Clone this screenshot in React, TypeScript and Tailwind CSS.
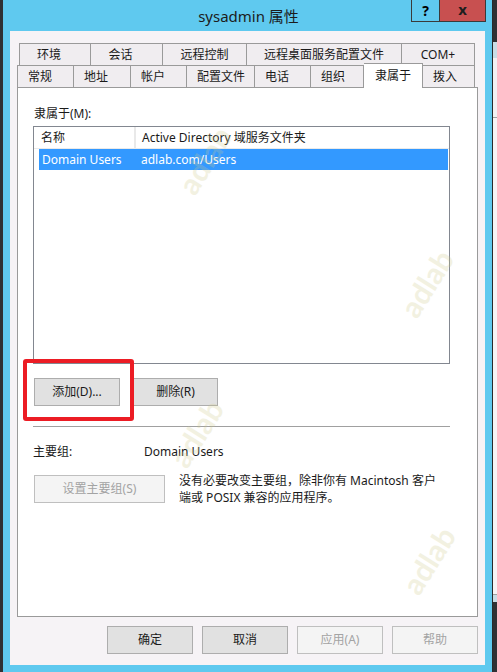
import React from "react";

const row1 = [
    {label: "环境", w: "w-[72px] border-l", pad: "pr-[12px]"},
    {label: "会话", w: "w-[72px]", pad: "pr-[12px]"},
    {label: "远程控制", w: "w-[84px]", pad: ""},
    {label: "远程桌面服务配置文件", w: "w-[155px]", pad: ""},
    {label: "COM+", w: "w-[73px]", pad: ""},
];

const row2 = [
    {label: "常规", w: "w-[57px] border-l"},
    {label: "地址", w: "w-[57px]"},
    {label: "帐户", w: "w-[56px]"},
    {label: "配置文件", w: "w-[68px]"},
    {label: "电话", w: "w-[56px]"},
    {label: "组织", w: "w-[53px]"},
    {label: "隶属于", w: "w-[59px]", active: true},
    {label: "拨入", w: "w-[52px]"},
];

const marks = [
    {left: "left-[168px]", top: "top-[145px]"},
    {left: "left-[390px]", top: "top-[268px]"},
    {left: "left-[160px]", top: "top-[418px]"},
    {left: "left-[392px]", top: "top-[545px]"},
];

function Btn({children, className = "", disabled = false}: {
    children: React.ReactNode;
    className?: string;
    disabled?: boolean;
}) {
    return (
        <div
            className={
                "h-[28px] flex items-center justify-center border text-[12px] " +
                (disabled
                    ? "bg-[#f4f4f4] border-[#bfbfbf] text-[#a3a3a3] "
                    : "bg-[#e1e1e1] border-[#adadad] text-[#1a1a1a] ") +
                className
            }
        >
            {children}
        </div>
    );
}

export default function App() {
    return (
        <div className="relative w-[497px] h-[672px] overflow-hidden bg-[#2f3134] flex font-['Noto_Sans','Noto_Sans_CJK_SC',sans-serif] text-[12px] text-[#1a1a1a]">
            <div className="w-[3px] shrink-0"></div>

            {/* Window frame */}
            <div className="w-[489px] h-[672px] shrink-0 bg-[#5fc9ef] flex flex-col">
                {/* Title bar */}
                <div className="relative h-[31px] flex items-center justify-center shrink-0">
                    <span className="text-[15px] text-[#1c1c1c] pt-[1px] pl-[2px]">sysadmin 属性</span>
                    <div className="absolute top-0 right-[6px] flex">
                        <div className="w-[29px] h-[22px] border border-t-0 border-[#3a3a3a] flex items-center justify-center text-[14px] font-bold text-black">?</div>
                        <div className="w-[46px] h-[22px] border border-t-0 border-l-0 border-[#3a3a3a] bg-[#c85050] flex items-center justify-center text-[15px] font-bold text-[#1e1e1e] pb-[2px]">x</div>
                    </div>
                </div>

                {/* Client area */}
                <div className="mx-[7px] h-[634px] bg-[#f6f3f6] flex flex-col px-[7px] pt-[12px]">
                    {/* Tabs */}
                    <div className="flex pl-[2px] h-[22px]">
                        {row1.map((t) => (
                            <div key={t.label} className={`${t.w} ${t.pad} h-[22px] border-t border-r border-[#9a9a9a] bg-[#f0edf0] flex items-center justify-center`}>
                                {t.label}
                            </div>
                        ))}
                    </div>
                    <div className="relative z-10 flex h-[22px] items-end">
                        {row2.map((t) =>
                            t.active ? (
                                <div key={t.label} className={`${t.w} h-[25px] -mb-[1px] border-t border-r border-[#9a9a9a] bg-white flex items-start justify-center pt-[3px]`}>
                                    {t.label}
                                </div>
                            ) : (
                                <div key={t.label} className={`${t.w} h-[22px] border-t border-r border-[#9a9a9a] bg-[#f0edf0] flex items-center pl-[10px]`}>
                                    {t.label}
                                </div>
                            )
                        )}
                    </div>

                    {/* Tab panel */}
                    <div className="relative w-[461px] h-[530px] border border-[#9a9a9a] bg-white px-[15px] pt-[17px]">
                        <div className="h-[18px] leading-[18px] pl-[1px]">隶属于(M):</div>

                        {/* List */}
                        <div className="mt-[3px] w-[417px] h-[238px] border border-[#828790] bg-white">
                            <div className="flex h-[22px] border-b border-[#eaeaea]">
                                <div className="w-[102px] border-r-2 border-[#e9e9e9] flex items-center pl-[7px]">名称</div>
                                <div className="flex-1 flex items-center pl-[6px]">Active Directory 域服务文件夹</div>
                            </div>
                            <div className="ml-[5px] mr-[1px] h-[21px] bg-[#3399ff] text-white flex items-center">
                                <div className="w-[97px] pl-[3px]">Domain Users</div>
                                <div className="pl-[5px]">adlab.com/Users</div>
                            </div>
                        </div>

                        <div className="mt-[14px] flex gap-[13px] pl-[1px]">
                            <Btn className="w-[86px]">添加(D)...</Btn>
                            <Btn className="w-[85px]">删除(R)</Btn>
                        </div>

                        <div className="mt-[20px] w-[417px] h-px bg-[#a0a0a0]"></div>

                        <div className="mt-[16px] flex h-[18px] items-center">
                            <div className="w-[111px]">主要组:</div>
                            <div>Domain Users</div>
                        </div>

                        <div className="mt-[13px] flex gap-[14px]">
                            <Btn disabled className="w-[131px] ml-[1px] mt-[1px]">设置主要组(S)</Btn>
                            <div className="leading-[17px] -mt-[2px]">
                                没有必要改变主要组，除非你有 Macintosh 客户<br/>
                                端或 POSIX 兼容的应用程序。
                            </div>
                        </div>

                        {/* Red annotation */}
                        <div className="absolute left-[5px] top-[271px] w-[111px] h-[62px] border-4 border-[#ec1c24] rounded-[3px]"></div>
                    </div>

                    {/* Dialog buttons */}
                    <div className="mt-[9px] flex justify-end gap-[9px]">
                        <Btn className="w-[86px] border-[#3c7fb1]">确定</Btn>
                        <Btn className="w-[86px] border-[#707070]">取消</Btn>
                        <Btn disabled className="w-[86px]">应用(A)</Btn>
                        <Btn disabled className="w-[86px]">帮助</Btn>
                    </div>
                </div>
            </div>

            {/* Window behind, right edge */}
            <div className="w-px shrink-0 bg-[#2a2a2a]"></div>
            <div className="flex-1 flex flex-col">
                <div className="h-[42px] bg-[#2f3134]"></div>
                <div className="h-[16px] bg-[#c9dde6]"></div>
                <div className="h-[60px] bg-[#f3f1f3] border-b border-[#a0a0a0]"></div>
                <div className="flex-1 bg-[#f6f4f6]"></div>
                <div className="h-[8px] bg-[#c9dde6] border-t border-[#a0a0a0]"></div>
                <div className="h-[70px] bg-[#2f3134]"></div>
            </div>

            {/* Watermark */}
            {marks.map((m, i) => (
                <div key={i} className={`pointer-events-none absolute ${m.left} ${m.top} -rotate-[58deg] text-[30px] font-bold text-[#cfc98a] opacity-25 font-['Lato',sans-serif] leading-none`}>
                    adlab
                </div>
            ))}
        </div>
    );
}
